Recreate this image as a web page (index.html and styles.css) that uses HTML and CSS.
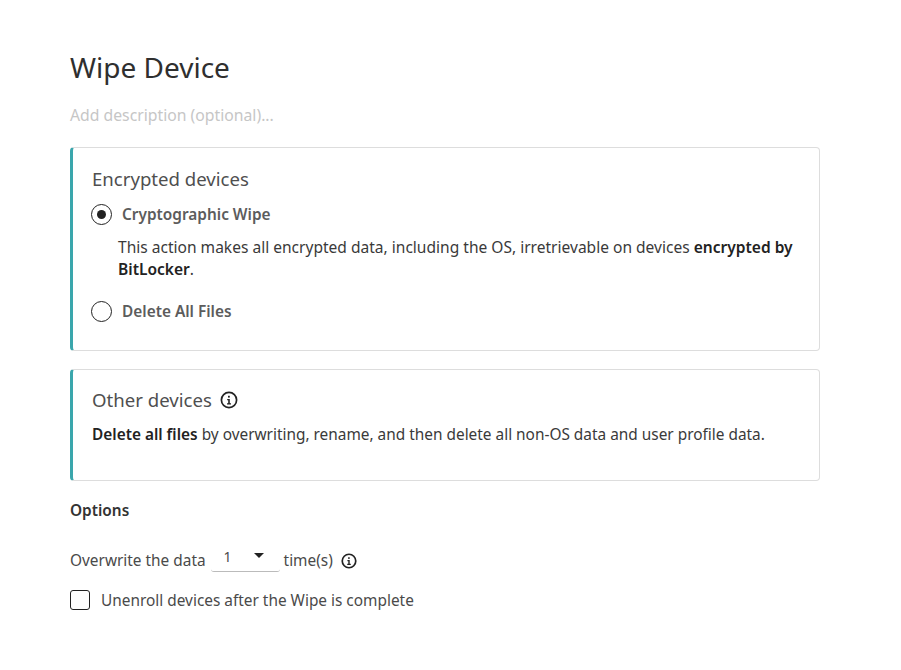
FILE: index.html
```html
<!DOCTYPE html>
<html lang="en">
<head>
<meta charset="utf-8">
<title>Wipe Device</title>
<link rel="stylesheet" href="styles.css">
</head>
<body>
<main class="page">
  <h1 class="title">Wipe Device</h1>
  <div class="desc">Add description (optional)...</div>
  <section class="card card-enc">
    <h2 class="card-title">Encrypted devices</h2>
    <div class="radio-row">
      <span class="radio checked"></span>
      <span class="radio-label">Cryptographic Wipe</span>
    </div>
    <p class="radio-help">This action makes all encrypted data, including the OS, irretrievable on devices <b>encrypted by BitLocker</b>.</p>
    <div class="radio-row second">
      <span class="radio"></span>
      <span class="radio-label">Delete All Files</span>
    </div>
  </section>
  <section class="card card-other">
    <h2 class="card-title">Other devices
      <svg class="info big" viewBox="0 0 18 18"><circle cx="9" cy="9" r="7.6" fill="none" stroke="#222" stroke-width="1.7"/><path d="M7.2 8h2.6v4.2h1.2v1.2H7v-1.2h1.2V9.2h-1z" fill="#222"/><rect x="8" y="4.8" width="1.8" height="1.8" fill="#222"/></svg>
    </h2>
    <p class="other-text"><b>Delete all files</b> by overwriting, rename, and then delete all non-OS data and user profile data.</p>
  </section>
  <h3 class="options">Options</h3>
  <div class="overwrite">
    <span>Overwrite the data</span>
    <span class="select"><span>1</span><i class="caret"></i></span>
    <span>time(s)</span>
    <svg class="info small" viewBox="0 0 18 18"><circle cx="9" cy="9" r="7.6" fill="none" stroke="#222" stroke-width="1.9"/><path d="M7.2 8h2.6v4.2h1.2v1.2H7v-1.2h1.2V9.2h-1z" fill="#222"/><rect x="8" y="4.8" width="1.8" height="1.8" fill="#222"/></svg>
  </div>
  <div class="check-row">
    <span class="checkbox"></span>
    <span>Unenroll devices after the Wipe is complete</span>
  </div>
</main>
</body>
</html>
```
FILE: styles.css
```css
* { box-sizing: border-box; }
html, body { margin: 0; padding: 0; background: #fff; }
body { font-family: "Noto Sans", "Open Sans", sans-serif; color: #3a3a3a; font-size: 15.4px; }
.page { width: 750px; margin-left: 70px; padding-top: 47px; }
.title { margin: 0; font-size: 28px; line-height: 40px; font-weight: 400; color: #2f2f2f; }
.desc { margin-top: 17px; font-size: 15.75px; line-height: 22px; color: #c6c6c6; }
.card { margin-top: 21px; border: 1px solid #ddd; border-left: 3px solid #3aa6ac; border-radius: 4px; padding: 18px 19px 0; }
.card-enc { height: 204px; }
.card-other { height: 112px; margin-top: 18px; padding-top: 17px; }
.card-title { margin: 0; font-size: 18.6px; line-height: 26px; font-weight: 400; color: #4f4f4f; display: flex; align-items: center; gap: 8px; }
.radio-row { display: flex; align-items: center; gap: 10px; margin-top: 11px; margin-left: -1px; height: 22px; }
.radio-row.second { margin-top: 20px; }
.radio { width: 21px; height: 21px; border: 1.5px solid #222; border-radius: 50%; display: flex; align-items: center; justify-content: center; }
.radio.checked::after { content: ""; width: 9px; height: 9px; border-radius: 50%; background: #222; }
.radio-label { font-weight: 600; color: #5c5c5c; }
.radio-help { margin: 11px 0 0 26px; font-size: 15.55px; line-height: 22px; color: #3a3a3a; }
b { font-weight: 600; color: #222; }
.other-text { margin: 11px 0 0; line-height: 22px; }
.info { display: inline-block; flex: none; }
.info.big { width: 18px; height: 18px; }
.info.small { width: 16px; height: 16px; }
.options { margin: 19px 0 0; font-size: 15.4px; line-height: 22px; font-weight: 600; color: #333; }
.overwrite { display: flex; align-items: center; gap: 4px; margin-top: 27px; height: 24px; line-height: 22px; color: #4a4a4a; }
.select { width: 69px; height: 22px; margin-left: 1px; border-bottom: 1px solid #bbb; border-radius: 0 0 3px 3px; display: flex; justify-content: space-between; align-items: center; padding: 0 2px 0 13px; font-size: 14px; }
.select span { margin-top: -8px; }
.caret { width: 0; height: 0; border-left: 5px solid transparent; border-right: 5px solid transparent; border-top: 5px solid #222; margin: -10px 14px 0 0; }
.overwrite .info { margin-left: 4px; }
.check-row { display: flex; align-items: center; gap: 11px; margin-top: 16px; height: 22px; color: #4a4a4a; }
.checkbox { width: 20px; height: 20px; border: 1.5px solid #222; border-radius: 3px; }
```
